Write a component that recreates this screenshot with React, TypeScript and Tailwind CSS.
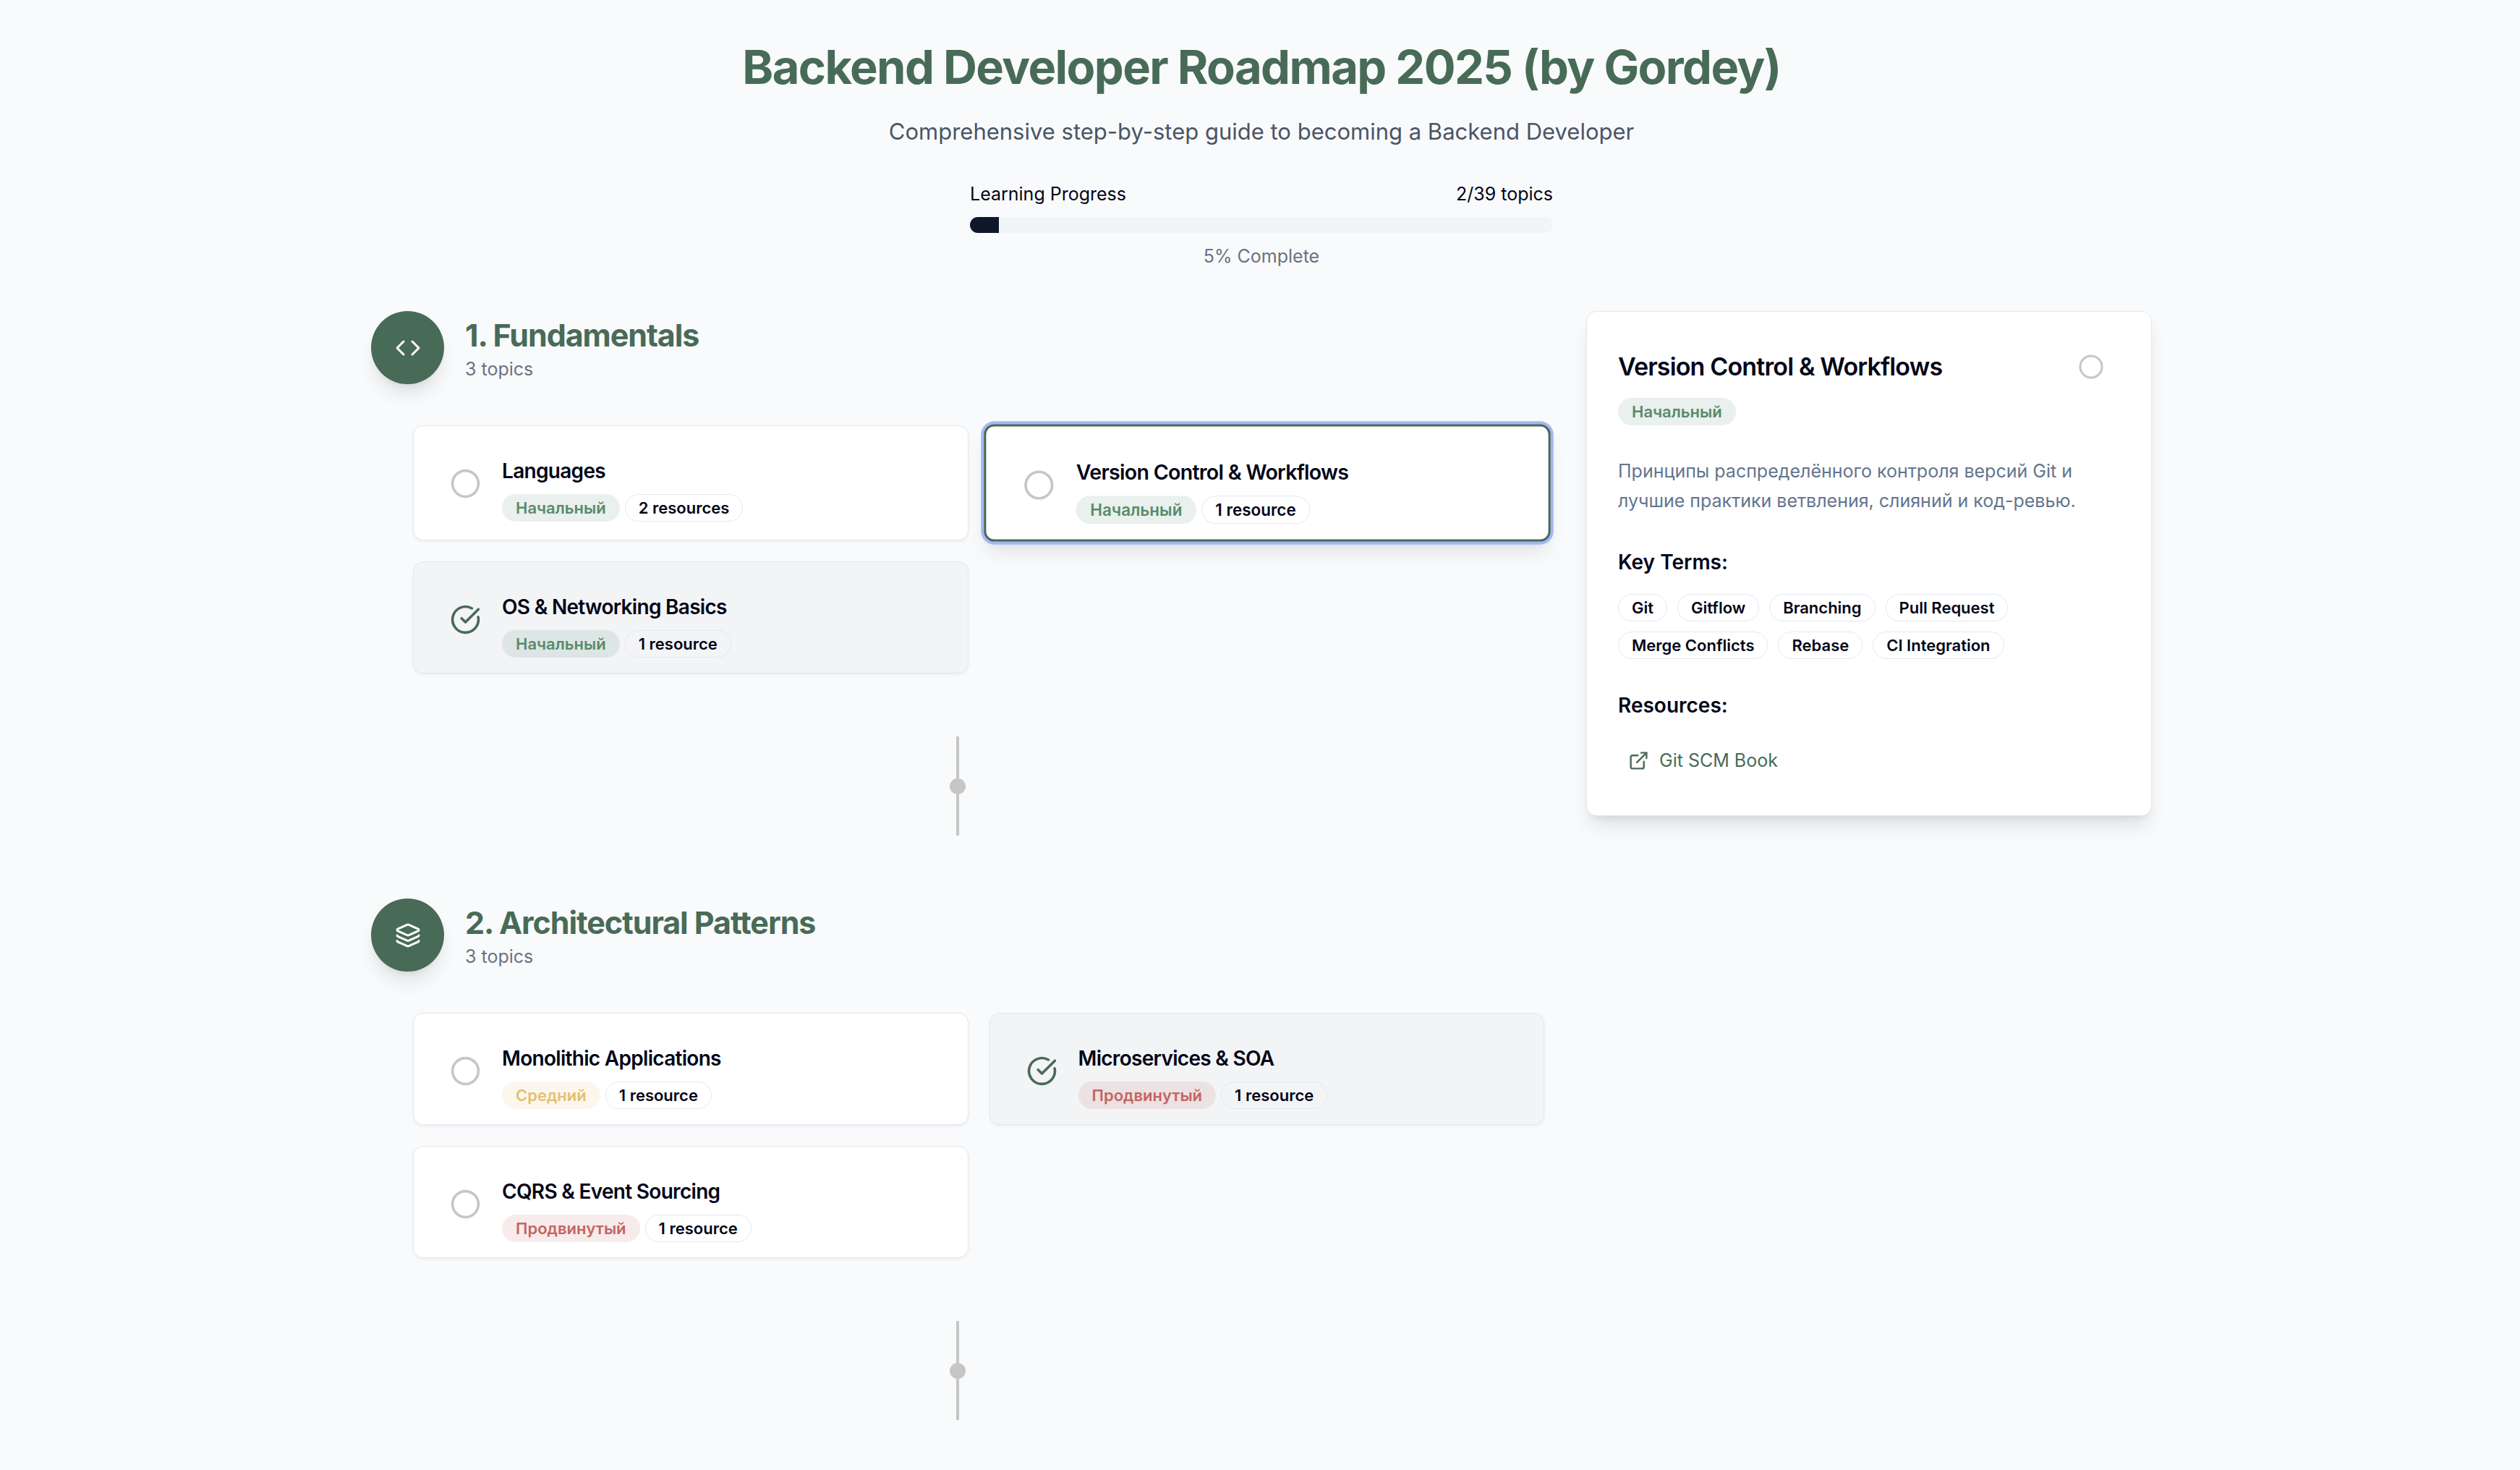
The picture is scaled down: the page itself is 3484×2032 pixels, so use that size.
import type { ReactNode } from "react";
import { Circle, CircleCheckBig, Code, ExternalLink, Layers } from "lucide-react";
import type { LucideIcon } from "lucide-react";

type Level = "beginner" | "intermediate" | "advanced";

interface Topic {
  title: string;
  level: Level;
  resources: number;
  done?: boolean;
  selected?: boolean;
}

const levels: Record<Level, { label: string; style: string }> = {
  beginner: { label: "Начальный", style: "bg-[#488269]/12 text-[#588b6b]" },
  intermediate: { label: "Средний", style: "bg-[#e6bf70]/13 text-[#e6bf70]" },
  advanced: { label: "Продвинутый", style: "bg-[#c46561]/13 text-[#c46561]" },
};

const sections: { title: string; icon: LucideIcon; topics: Topic[] }[] = [
  {
    title: "1. Fundamentals",
    icon: Code,
    topics: [
      { title: "Languages", level: "beginner", resources: 2 },
      { title: "Version Control & Workflows", level: "beginner", resources: 1, selected: true },
      { title: "OS & Networking Basics", level: "beginner", resources: 1, done: true },
    ],
  },
  {
    title: "2. Architectural Patterns",
    icon: Layers,
    topics: [
      { title: "Monolithic Applications", level: "intermediate", resources: 1 },
      { title: "Microservices & SOA", level: "advanced", resources: 1, done: true },
      { title: "CQRS & Event Sourcing", level: "advanced", resources: 1 },
    ],
  },
];

const keyTerms = ["Git", "Gitflow", "Branching", "Pull Request", "Merge Conflicts", "Rebase", "CI Integration"];

const pill = "inline-flex items-center rounded-full border px-[18px] py-1 text-[22px] leading-7 font-semibold";

function LevelBadge({ level }: { level: Level }) {
  return <span className={`${pill} border-transparent ${levels[level].style}`}>{levels[level].label}</span>;
}

function OutlineBadge({ children }: { children: ReactNode }) {
  return <span className={`${pill} border-slate-200 text-slate-950`}>{children}</span>;
}

function TopicCard({ topic }: { topic: Topic }) {
  const frame = topic.selected
    ? "scale-[1.02] border-3 border-[#486b57] bg-white shadow-[0_0_0_4px_#a3b8f2,0_18px_27px_-5px_rgb(0_0_0/0.1),0_7px_11px_-7px_rgb(0_0_0/0.1)]"
    : topic.done
      ? "border border-gray-200 bg-gray-100 shadow-[0_2px_4px_0_rgb(0_0_0/0.05)]"
      : "border border-gray-200 bg-white shadow-[0_2px_4px_0_rgb(0_0_0/0.05)]";
  return (
    <article className={`flex items-start gap-[22px] rounded-[14px] px-[43px] pt-11 pb-[21px] ${frame}`}>
      <button type="button" aria-label={`Toggle ${topic.title}`} aria-pressed={!!topic.done} className="mt-[7px] shrink-0 p-[7px]">
        {topic.done ? (
          <CircleCheckBig className="size-[43px] text-[#486b57]" />
        ) : (
          <Circle className="size-[43px] text-[#c6c6c6]" />
        )}
      </button>
      <div className="min-w-0 flex-1">
        <h3 className="text-[28px] leading-9 font-semibold tracking-tight text-slate-950">{topic.title}</h3>
        <div className="mt-[14px] flex flex-wrap gap-[7px]">
          <LevelBadge level={topic.level} />
          <OutlineBadge>
            {topic.resources} {topic.resources === 1 ? "resource" : "resources"}
          </OutlineBadge>
        </div>
      </div>
    </article>
  );
}

function Connector() {
  return (
    <div className="flex flex-col items-center py-[87px]" aria-hidden="true">
      <div className="h-[58px] w-1 bg-[#c6c6c6]" />
      <div className="size-[22px] rounded-full bg-[#c6c6c6]" />
      <div className="h-[57px] w-1 bg-[#c6c6c6]" />
    </div>
  );
}

export default function App() {
  return (
    <div className="min-h-screen bg-[#f9fafc] pl-1 font-['Inter',sans-serif] text-slate-950">
      <main className="mx-auto max-w-[2520px] px-[29px] pt-[57px]">
        <header className="flex flex-col items-center text-center">
          <h1 className="text-[65px] leading-[72px] font-bold tracking-tight text-[#486b57]">
            Backend Developer Roadmap 2025 (by Gordey)
          </h1>
          <p className="mt-7 text-[31px] leading-[50px] text-gray-600">
            Comprehensive step-by-step guide to becoming a Backend Developer
          </p>
          <div className="mt-[43px] w-full max-w-[806px] text-[25px] leading-9">
            <div className="flex justify-between">
              <span id="progress-label">Learning Progress</span>
              <span>2/39 topics</span>
            </div>
            <div
              role="progressbar"
              aria-labelledby="progress-label"
              aria-valuenow={5}
              className="mt-[14px] h-[22px] overflow-hidden rounded-full bg-slate-100"
            >
              <div className="h-full w-[5%] bg-slate-900" />
            </div>
            <p className="mt-[14px] text-gray-500">5% Complete</p>
          </div>
        </header>

        <div className="mt-[58px] grid grid-cols-3 items-start gap-[58px]">
          <div className="col-span-2">
            {sections.map(({ title, icon: Icon, topics }) => (
              <div key={title}>
                <section>
                  <div className="flex items-center gap-[29px]">
                    <div className="flex size-[101px] items-center justify-center rounded-full bg-[#486b57] text-white shadow-[0_18px_27px_-5px_rgb(0_0_0/0.1),0_7px_11px_-7px_rgb(0_0_0/0.1)]">
                      <Icon className="size-9" />
                    </div>
                    <div>
                      <h2 className="text-[43px] leading-[58px] font-bold tracking-tight text-[#486b57]">{title}</h2>
                      <p className="text-[25px] leading-9 text-gray-500">{topics.length} topics</p>
                    </div>
                  </div>
                  <div className="mt-[57px] ml-[58px] grid grid-cols-2 gap-[29px]">
                    {topics.map((topic) => (
                      <TopicCard key={topic.title} topic={topic} />
                    ))}
                  </div>
                </section>
                <Connector />
              </div>
            ))}
          </div>

          <aside className="rounded-[14px] border border-slate-200 bg-white p-[43px] shadow-[0_18px_27px_-5px_rgb(0_0_0/0.1),0_7px_11px_-7px_rgb(0_0_0/0.1)]">
            <div className="flex h-[65px] items-center justify-between">
              <h2 className="text-[34px] leading-[45px] font-semibold tracking-tight">Version Control &amp; Workflows</h2>
              <button type="button" aria-label="Mark topic as complete" className="px-[22px] py-[14px]">
                <Circle className="size-9 text-[#c6c6c6]" />
              </button>
            </div>
            <div className="mt-[11px] flex">
              <LevelBadge level="beginner" />
            </div>
            <p className="mt-[43px] text-[25px] leading-[41px] text-slate-500">
              Принципы распределённого контроля версий Git и лучшие практики ветвления, слияний и код-ревью.
            </p>
            <h3 className="mt-[43px] text-[28px] leading-[43px] font-semibold">Key Terms:</h3>
            <div className="mt-[22px] flex flex-wrap gap-[14px]">
              {keyTerms.map((term) => (
                <OutlineBadge key={term}>{term}</OutlineBadge>
              ))}
            </div>
            <h3 className="mt-[43px] text-[28px] leading-[43px] font-semibold">Resources:</h3>
            <a href="#git-scm-book" className="mt-[22px] flex items-center gap-[14px] p-[14px] text-[25px] leading-[37px] text-[#486b57]">
              <ExternalLink className="size-[29px]" />
              Git SCM Book
            </a>
          </aside>
        </div>
      </main>
    </div>
  );
}
